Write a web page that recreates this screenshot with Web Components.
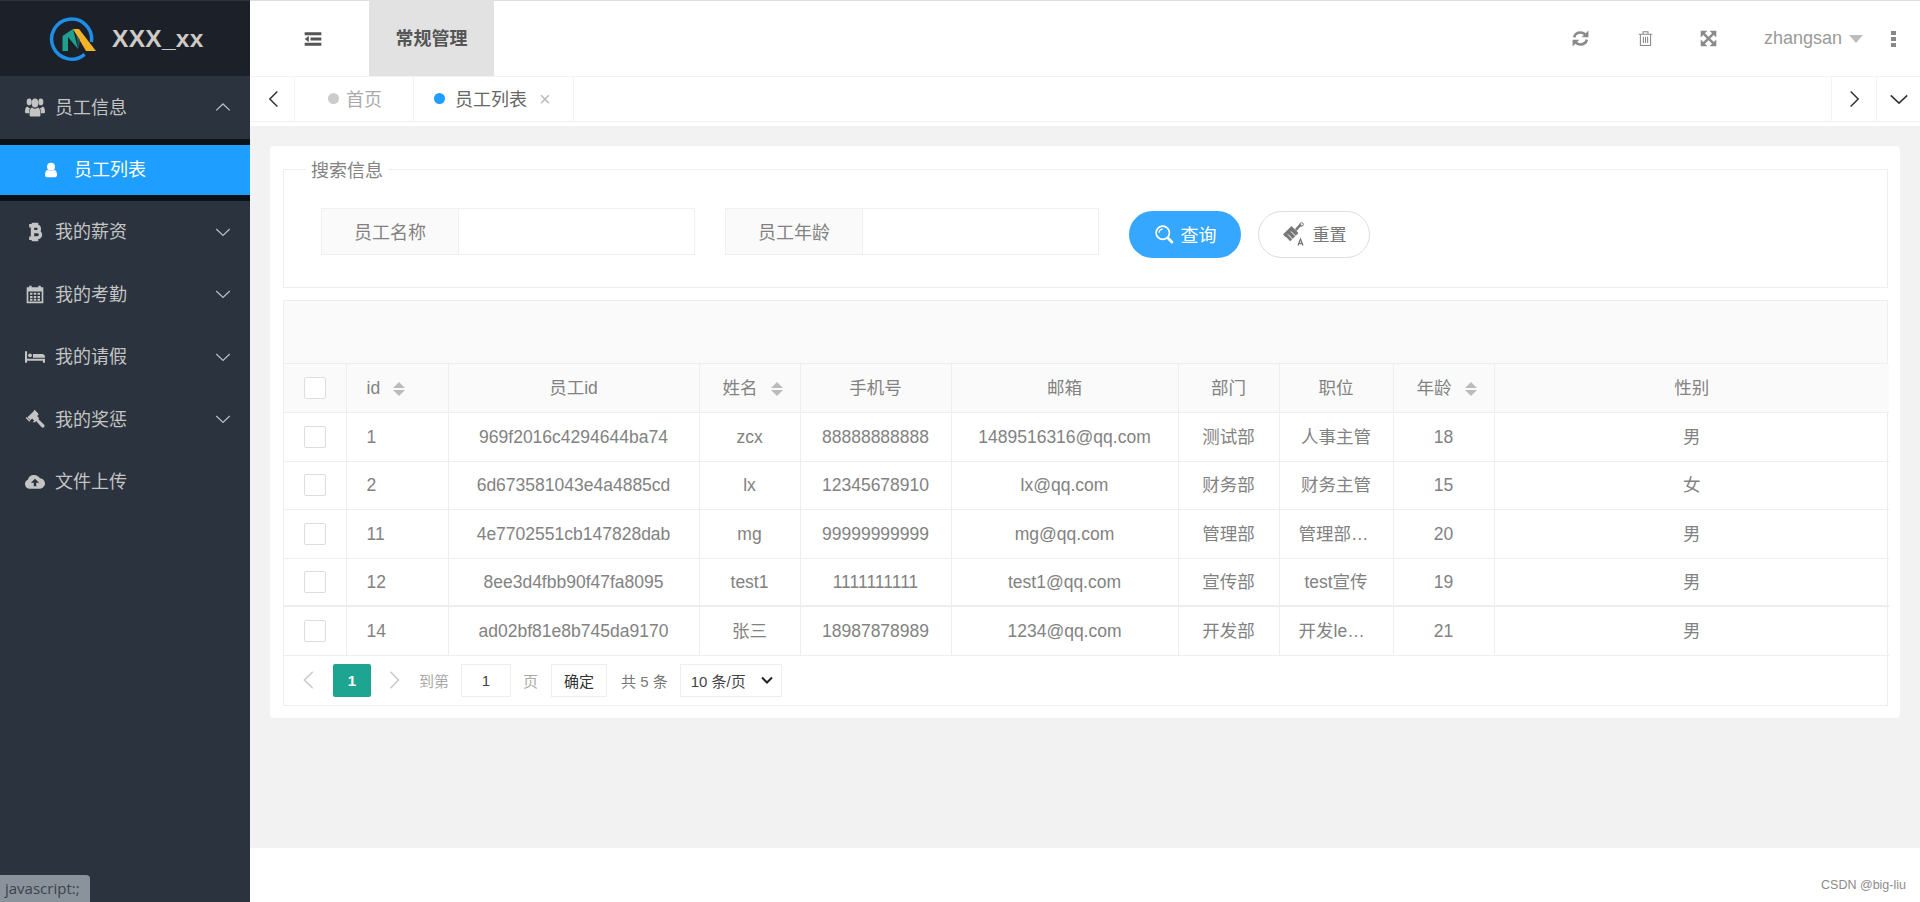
<!DOCTYPE html>
<html lang="zh">
<head>
<meta charset="utf-8">
<title>员工列表</title>
<style>
    html, body { margin: 0; height: 100%; overflow: hidden; }
    body { font-family: "Liberation Sans", "Noto Sans CJK SC", sans-serif; color: #777; background: #fff; }
</style>
</head>
<body>
<app-shell>
    <side-menu slot="side"></side-menu>
    <top-bar slot="main"></top-bar>
    <tab-strip slot="main"></tab-strip>
    <content-area slot="main">
        <search-panel></search-panel>
        <staff-table></staff-table>
    </content-area>
    <page-footer slot="main"></page-footer>
</app-shell>
<status-bubble>javascript:;</status-bubble>

<script>
const ICONS = {
    users: '<g transform="translate(0 -3.500) scale(1 1.350)"><circle cx="5" cy="7" r="3"/><circle cx="19" cy="7" r="3"/><circle cx="12" cy="8" r="4"/><path d="M0 16c0-3 1-5 3-5 1 1 2 1.500 3 1.500-.7 1-1 2.500-1 4.500H1c-.6 0-1-.4-1-1zM24 16c0-3-1-5-3-5-1 1-2 1.500-3 1.500.7 1 1 2.500 1 4.500h4c.6 0 1-.4 1-1zM7 20c-1 0-1.500-.6-1.500-1.500 0-4 1-6.500 3-6.500 2.300 1.500 4.700 1.500 7 0 2 0 3 2.500 3 6.500 0 .9-.5 1.500-1.500 1.500z"/></g>',
    user: '<circle cx="12" cy="7" r="6"/><path d="M3 20c0-5 1.500-8 4.500-8 3 2 6 2 9 0 3 0 4.500 3 4.500 8 0 2-1.500 3-3 3H6c-1.500 0-3-1-3-3z"/>',
    bitcoin: '<path fill="none" stroke="currentColor" stroke-width="4" d="M9 4v16M8 5h5.500c5 0 5 6.500 0 6.500H8M8 11.500h6.500c5.500 0 5.500 7.500 0 7.500H8M5 4.500h4M5 19.500h4M10 1v3M14 1v3M10 20v3M14 20v3"/>',
    calendar: '<path fill-rule="evenodd" d="M2 4h3V2h3v2h8V2h3v2h3v19H2zM4 9v12h16V9z"/><path d="M6 10.500h3v2.500H6zM10.500 10.500h3v2.500h-3zM15 10.500h3v2.500h-3zM6 14.500h3V17H6zM10.500 14.500h3V17h-3zM15 14.500h3V17h-3zM6 18h3v2H6zM10.500 18h3v2h-3zM15 18h3v2h-3z"/>',
    bed: '<path d="M0 5h2.500v9H24v5h-2.500v-2.500h-19V19H0z"/><circle cx="6" cy="10" r="2.300"/><path d="M9.500 8.500h11c2 0 3.500 1.500 3.500 3.500v1H9.500z"/>',
    gavel: '<path d="M11 2 3 10l3.500 3.500 2-2 2.500 2.500-2 2 0 0 3 0 5-5-2.500-2.500 2-2z"/><path d="M12.500 13.500 15 11l8 8c.7.700.7 2 0 2.700l-.3.300c-.7.700-2 .7-2.700 0z"/><path d="M2 9.500 .8 10.700 5.300 15.200 6.500 14zM11.500 1 10.500 2 15 6.500 16 5.500z"/>',
    cloud: '<path fill-rule="evenodd" d="M6 20c-3.300 0-6-2.500-6-5.700 0-2.500 1.500-4.500 3.700-5.300C4 6 7 3.500 11 3.500c3 0 5.500 1.500 7 4 3.500.2 6 3 6 6.300S21 20 18 20zM12 8l-5 5h3.500v4h3v-4H17z"/>',
    chevUp: '<path fill="none" stroke="currentColor" stroke-width="1.700" d="M3 16.500 12 8l9 8.500"/>',
    chevDown: '<path fill="none" stroke="currentColor" stroke-width="1.700" d="M3 8l9 8.500L21 8"/>',
    chevLeft: '<path fill="none" stroke="currentColor" stroke-width="1.800" d="M16 3 7 12l9 9"/>',
    chevRight: '<path fill="none" stroke="currentColor" stroke-width="1.800" d="M8 3l9 9-9 9"/>',
    fold: '<path d="M2 4h20v3.500H2zM9 10.300h13v3.400H9zM2 16.500h20V20H2zM7 8.500v7L2 12z"/>',
    refresh: '<path fill="none" stroke="currentColor" stroke-width="3.300" d="M4 10.500C5 6.500 8 4.500 12 4.500c3 0 5 1.500 6.500 3.500M20 13.500c-1 4-4 6-8 6-3 0-5-1.500-6.500-3.500"/><path d="M22 2v8.500h-8.500zM2 22v-8.500h8.500z"/>',
    trash: '<path fill="none" stroke="currentColor" stroke-width="1.500" d="M2.500 6h19M8.500 6V2.500h7V6M4.800 6v16h14.400V6M9 9.500v9M12 9.500v9M15 9.500v9"/>',
    expand: '<path d="M1 1h9.500L1 10.500zM23 1v9.500L13.500 1zM1 23v-9.500l9.500 9.500zM23 23h-9.500l9.500-9.500z"/><path fill="none" stroke="currentColor" stroke-width="3.400" d="M4 4l16 16M20 4 4 20"/>',
    search: '<circle cx="10.500" cy="10.500" r="8" fill="none" stroke="currentColor" stroke-width="2"/><path fill="none" stroke="currentColor" stroke-width="1.500" d="M6 10.500a4.500 4.500 0 0 1 4.500-4.500"/><path fill="none" stroke="currentColor" stroke-width="3.400" stroke-linecap="round" d="M17 17l4.500 4.500"/>',
    broom: '<path d="M1 12.500 9.500 4l7 7L8 19.500z"/><path fill="none" stroke="#fff" stroke-width="1" d="M3.500 15l5 5M6 12.500l5 5M9 9.500l5 5"/><path d="M13 7l5-5.500 1.800 1.800L14.500 9z"/><circle cx="19.500" cy="2.500" r="1.800" fill="none" stroke="currentColor"/><path fill="none" stroke="currentColor" stroke-width="1.300" d="M16 23.500l2.500-6.500 2.500 6.500M17 21.500h3"/>'
};

class AppIcon extends HTMLElement {
    constructor() {
        super();
        this.attachShadow({mode: 'open'});
    }

    connectedCallback() {
        const size = this.getAttribute('size') || 16;
        this.shadowRoot.innerHTML = `
        <style>
            :host { display: inline-flex; flex: none; }
            svg { display: block; fill: currentColor; }
        </style>
        <svg width="${size}" height="${size}" viewBox="0 0 24 24">${ICONS[this.getAttribute('name')]}</svg>
        `
    }
}

class AppShell extends HTMLElement {
    constructor() {
        super();
        this.attachShadow({mode: 'open'});
    }

    connectedCallback() {
        this.shadowRoot.innerHTML = `
        <style>
            :host { display: flex; height: 902px; }
            #side { width: 250px; flex: none; display: flex; }
            #main { flex: 1; min-width: 0; display: flex; flex-direction: column; }
        </style>
        <div id="side"><slot name="side"></slot></div>
        <div id="main"><slot name="main"></slot></div>
        `
    }
}

class SideMenu extends HTMLElement {
    constructor() {
        super();
        this.attachShadow({mode: 'open'});
    }

    connectedCallback() {
        const item = (icon, text, arrow) => `
            <div class="item">
                <app-icon name="${icon}" size="20"></app-icon>
                <span>${text}</span>
                ${arrow ? `<app-icon class="arrow" name="${arrow}" size="18"></app-icon>` : ''}
            </div>`;
        this.shadowRoot.innerHTML = `
        <style>
            :host { display: flex; flex-direction: column; width: 250px; background: #2a333e; color: #c4c4c4; font-size: 18px; }
            #logo { height: 75px; margin-top: 1px; background: #1c2129; display: flex; align-items: center; padding-left: 49px; gap: 15px; flex: none; }
            #logo b { font-size: 24.500px; color: #cfcac5; letter-spacing: .3px; }
            .item { height: 62.500px; display: flex; align-items: center; padding: 0 18px 0 25px; gap: 10px; }
            .item span { flex: 1; padding-bottom: 3px; }
            .item .arrow { color: #b9bec4; }
            #sub { background: #0c1017; padding: 6px 0; }
            #active { height: 50px; background: #1e9fff; color: #fff; display: flex; align-items: center; padding-left: 43px; gap: 15px; }
            #active span { padding-bottom: 3px; }
        </style>
        <div id="logo">
            <svg width="48" height="48" viewBox="0 0 48 48">
                <path d="M35.600 39.300A20 20 0 1 1 42.400 27" fill="none" stroke="#1e8fe6" stroke-width="3.500"/>
                <path d="M13.500 36V21L24 14l5 20-10-12v14z" fill="#1f9f8e"/>
                <path d="M24 14h6l17 22h-10z" fill="#f0b429"/>
                <path d="M27 19l4 6 -1.500 9z" fill="#22586a"/>
            </svg>
            <b>XXX_xx</b>
        </div>
        ${item('users', '员工信息', 'chevUp')}
        <div id="sub"><div id="active"><app-icon name="user" size="16"></app-icon><span>员工列表</span></div></div>
        ${item('bitcoin', '我的薪资', 'chevDown')}
        ${item('calendar', '我的考勤', 'chevDown')}
        ${item('bed', '我的请假', 'chevDown')}
        ${item('gavel', '我的奖惩', 'chevDown')}
        ${item('cloud', '文件上传')}
        `
    }
}

class TopBar extends HTMLElement {
    constructor() {
        super();
        this.attachShadow({mode: 'open'});
    }

    connectedCallback() {
        this.shadowRoot.innerHTML = `
        <style>
            :host { display: flex; height: 75px; margin-top: 1px; flex: none; align-items: center; background: #fff; color: #8a8a8a; box-shadow: 0 -1px 0 #ddd; }
            #fold { width: 119px; display: flex; justify-content: center; color: #555; padding-left: 7px; box-sizing: border-box; }
            #crumb { width: 125px; height: 76px; margin-top: -1px; background: #e2e2e2; color: #555; font-weight: bold; font-size: 18px; display: flex; align-items: center; justify-content: center; padding-bottom: 2px; box-sizing: border-box; }
            #right { margin-left: auto; display: flex; align-items: center; }
            #right app-icon { margin-right: 46px; }
            #user { font-size: 18px; color: #9a9a9a; }
            #caret { width: 0; height: 0; border: 7px solid transparent; border-top: 8px solid #bdbdbd; border-bottom: 0; margin: 0 8px 0 7px; }
            #more { display: flex; flex-direction: column; gap: 2px; margin: 0 24px 0 20px; }
            #more i { width: 5px; height: 4px; background: #888; }
        </style>
        <div id="fold"><app-icon name="fold" size="20"></app-icon></div>
        <div id="crumb">常规管理</div>
        <div id="right">
            <app-icon name="refresh" size="19" style="margin-right:47px"></app-icon>
            <app-icon name="trash" size="17"></app-icon>
            <app-icon name="expand" size="17" style="margin-right:47px"></app-icon>
            <span id="user">zhangsan</span>
            <span id="caret"></span>
            <span id="more"><i></i><i></i><i></i></span>
        </div>
        `
    }
}

class TabStrip extends HTMLElement {
    constructor() {
        super();
        this.attachShadow({mode: 'open'});
    }

    connectedCallback() {
        this.shadowRoot.innerHTML = `
        <style>
            :host { display: flex; height: 44px; flex: none; align-items: stretch; background: #fff; border-top: 1px solid #f3f3f3; border-bottom: 1px solid #f0f0f0; font-size: 18px; box-sizing: content-box; margin-bottom: 4px; }
            .arrow { width: 45px; display: flex; align-items: center; justify-content: center; color: #333; flex: none; border-right: 1px solid #f3f3f3; box-sizing: border-box; padding-left: 3px; }
            .arrow.r { border-right: 0; border-left: 1px solid #f3f3f3; padding-left: 0; }
            .tab { display: flex; align-items: center; border-right: 1px solid #f3f3f3; box-sizing: border-box; flex: none; padding-bottom: 2px; }
            .dot { width: 11px; height: 11px; border-radius: 50%; margin-right: 7px; margin-top: 1px; }
            #home { width: 119px; padding-left: 33px; color: #aaa; }
            #home .dot { background: #ccc; }
            #cur { width: 160px; padding-left: 20px; color: #666; }
            #cur .dot { background: #1e9fff; margin-right: 10px; }
            #close { margin-left: 12px; font-size: 20px; color: #bbb; line-height: 1; margin-top: 2px; }
            #fill { flex: 1; }
        </style>
        <div class="arrow"><app-icon name="chevLeft" size="20"></app-icon></div>
        <div class="tab" id="home"><span class="dot"></span>首页</div>
        <div class="tab" id="cur"><span class="dot"></span>员工列表<span id="close">×</span></div>
        <div id="fill"></div>
        <div class="arrow r"><app-icon name="chevRight" size="20"></app-icon></div>
        <div class="arrow r" style="width:44px"><app-icon name="chevDown" size="22"></app-icon></div>
        `
    }
}

class ContentArea extends HTMLElement {
    constructor() {
        super();
        this.attachShadow({mode: 'open'});
    }

    connectedCallback() {
        this.shadowRoot.innerHTML = `
        <style>
            :host { display: block; flex: 1; background: #f2f2f2; padding: 20px 20px 0; }
            #card { background: #fff; border-radius: 4px; padding: 11px 12px 13px 13px; height: 572px; box-sizing: border-box; display: flex; flex-direction: column; gap: 12px; }
        </style>
        <div id="card"><slot></slot></div>
        `
    }
}

class SearchPanel extends HTMLElement {
    constructor() {
        super();
        this.attachShadow({mode: 'open'});
    }

    connectedCallback() {
        const field = (text, gap) => `
            <div class="field" style="margin-right:${gap}px"><label>${text}</label><div class="input"></div></div>`;
        this.shadowRoot.innerHTML = `
        <style>
            :host { display: block; font-size: 18px; color: #828282; }
            fieldset { margin: 0; border: 1px solid #eee; padding: 28px 0 0 37px; height: 131px; box-sizing: border-box; min-width: 0; }
            legend { margin-left: -15px; padding: 0 5px; line-height: 24px; }
            legend span { display: inline-block; transform: translateY(2px); }
            #row { display: flex; align-items: flex-start; margin-top: -1px; }
            .field { display: flex; width: 374px; height: 47px; border: 1px solid #f0f0f0; box-sizing: border-box; }
            label { width: 137px; background: #fafafa; border-right: 1px solid #f0f0f0; display: flex; align-items: center; justify-content: center; flex: none; padding-bottom: 2px; box-sizing: border-box; }
            .input { flex: 1; background: #fff; }
            button { font: inherit; height: 47px; width: 112px; border-radius: 24px; display: flex; align-items: center; justify-content: center; gap: 7px; padding: 0 0 2px; box-sizing: border-box; margin-top: 3px; }
            #find { background: #36a7ff; border: 0; color: #fff; margin-right: 17px; }
            #reset { background: #fff; border: 1px solid #ddd; color: #777; font-size: 17px; }
        </style>
        <fieldset>
            <legend><span>搜索信息</span></legend>
            <div id="row">
                ${field('员工名称', 30)}
                ${field('员工年龄', 30)}
                <button id="find"><app-icon name="search" size="20"></app-icon>查询</button>
                <button id="reset"><app-icon name="broom" size="24"></app-icon>重置</button>
            </div>
        </fieldset>
        `
    }
}

class StaffTable extends HTMLElement {
    constructor() {
        super();
        this.attachShadow({mode: 'open'});
    }

    get rows() {
        return [
            ['1', '969f2016c4294644ba74', 'zcx', '88888888888', '1489516316@qq.com', '测试部', '人事主管', '18', '男'],
            ['2', '6d673581043e4a4885cd', 'lx', '12345678910', 'lx@qq.com', '财务部', '财务主管', '15', '女'],
            ['11', '4e7702551cb147828dab', 'mg', '99999999999', 'mg@qq.com', '管理部', '管理部主管', '20', '男'],
            ['12', '8ee3d4fbb90f47fa8095', 'test1', '1111111111', 'test1@qq.com', '宣传部', 'test宣传', '19', '男'],
            ['14', 'ad02bf81e8b745da9170', '张三', '18987878989', '1234@qq.com', '开发部', '开发leader', '21', '男']
        ];
    }

    connectedCallback() {
        const sort = '<span class="sort"><i class="up"></i><i class="down"></i></span>';
        const widths = [62, 102, 251, 101, 151, 227, 101, 114, 101, 395];
        const heights = [49, 48, 49, 48, 49];
        const body = this.rows.map((r, i) => `
            <tr class="${i === 3 ? 'thick' : ''}" style="height:${heights[i]}px">
                <td><span class="box"></span></td>
                <td class="left">${r[0]}</td>
                ${r.slice(1).map(c => `<td>${c}</td>`).join('')}
            </tr>`).join('');
        this.shadowRoot.innerHTML = `
        <style>
            :host { display: block; border: 1px solid #eee; font-size: 17.500px; color: #828282; }
            #tools { height: 62px; background: #fafafa; border-bottom: 1px solid #eee; }
            table { border-collapse: collapse; table-layout: fixed; width: 1605px; }
            th, td { border: 1px solid #eee; padding: 0 19px; text-align: center; font-weight: normal; white-space: nowrap; overflow: hidden; text-overflow: ellipsis; box-sizing: border-box; line-height: 22px; }
            tr > :first-child { border-left: 0; padding: 0; }
            tr > :last-child { border-right: 0; }
            tr:first-child th { border-top: 0; }
            th { height: 48px; background: #fafafa; }
            th.sorted { padding: 0 10px 0 16px; }
            .left, th.left { text-align: left; padding: 0 0 0 20px; }
            .box { display: block; width: 22px; height: 22px; margin-left: 20px; border: 1px solid #ddd; border-radius: 2px; box-sizing: border-box; background: #fff; }
            .sort { display: inline-flex; flex-direction: column; gap: 2px; margin-left: 13px; vertical-align: middle; }
            .sort i { width: 0; height: 0; border: 6px solid transparent; }
            .sort .up { border-top: 0; border-bottom: 6px solid #bbb; }
            .sort .down { border-bottom: 0; border-top: 6px solid #bbb; }
            .thick td { border-bottom: 2px solid #eee; }
        </style>
        <div id="tools"></div>
        <table>
            <colgroup>${widths.map(w => `<col style="width:${w}px">`).join('')}</colgroup>
            <thead>
                <tr>
                    <th><span class="box"></span></th>
                    <th class="left">id${sort}</th>
                    <th>员工id</th>
                    <th class="sorted">姓名${sort}</th>
                    <th>手机号</th>
                    <th>邮箱</th>
                    <th>部门</th>
                    <th>职位</th>
                    <th class="sorted">年龄${sort}</th>
                    <th>性别</th>
                </tr>
            </thead>
            <tbody>${body}</tbody>
        </table>
        <page-bar></page-bar>
        `
    }
}

class PageBar extends HTMLElement {
    constructor() {
        super();
        this.attachShadow({mode: 'open'});
    }

    connectedCallback() {
        this.shadowRoot.innerHTML = `
        <style>
            :host { display: flex; align-items: center; height: 49px; font-size: 15px; color: #777; padding-left: 14px; box-sizing: border-box; }
            app-icon { color: #ccc; }
            #cur { width: 38px; height: 33px; margin: 0 12px 0 13px; background: #1ea592; border-radius: 2px; color: #fff; font-weight: bold; display: flex; align-items: center; justify-content: center; }
            .muted { color: #aaa; }
            .box { height: 33px; border: 1px solid #eee; box-sizing: border-box; display: flex; align-items: center; justify-content: center; background: #fff; }
            #jump { width: 50px; margin: 0 12px 0 12px; color: #444; }
            #ok { width: 56px; margin: 0 14px 0 13px; color: #333; }
            #size { width: 102px; margin-left: 12px; color: #444; justify-content: space-between; padding: 0 8px 0 10px; }
            #size svg { display: block; }
        </style>
        <app-icon name="chevLeft" size="22"></app-icon>
        <span id="cur">1</span>
        <app-icon name="chevRight" size="22"></app-icon>
        <span class="muted" style="margin-left:14px">到第</span>
        <span class="box" id="jump">1</span>
        <span class="muted">页</span>
        <span class="box" id="ok">确定</span>
        <span>共 5 条</span>
        <span class="box" id="size">10 条/页
            <svg width="12" height="8" viewBox="0 0 12 8"><path d="M1 1.500 6 6.500l5-5" fill="none" stroke="#222" stroke-width="2"/></svg>
        </span>
        `
    }
}

class PageFooter extends HTMLElement {
    constructor() {
        super();
        this.attachShadow({mode: 'open'});
    }

    connectedCallback() {
        this.shadowRoot.innerHTML = `
        <style>
            :host { display: flex; height: 54px; flex: none; justify-content: flex-end; align-items: center; background: #fff; padding: 20px 14px 0 0; box-sizing: border-box; font-size: 12.500px; color: #8c8c8c; font-family: "Liberation Sans", sans-serif; }
        </style>
        <span>CSDN @big-liu</span>
        `
    }
}

class StatusBubble extends HTMLElement {
    constructor() {
        super();
        this.attachShadow({mode: 'open'});
    }

    connectedCallback() {
        this.shadowRoot.innerHTML = `
        <style>
            :host { position: fixed; left: 0; bottom: 0; width: 90px; height: 27px; box-sizing: border-box; padding-left: 5px; background: #8a929c; color: #3d434b; border-top-right-radius: 4px; font: 15px/27px "Open Sans", sans-serif; white-space: nowrap; overflow: hidden; }
        </style>
        <slot></slot>
        `
    }
}

customElements.define('app-icon', AppIcon);
customElements.define('app-shell', AppShell);
customElements.define('side-menu', SideMenu);
customElements.define('top-bar', TopBar);
customElements.define('tab-strip', TabStrip);
customElements.define('content-area', ContentArea);
customElements.define('search-panel', SearchPanel);
customElements.define('staff-table', StaffTable);
customElements.define('page-bar', PageBar);
customElements.define('page-footer', PageFooter);
customElements.define('status-bubble', StatusBubble);
</script>
</body>
</html>
